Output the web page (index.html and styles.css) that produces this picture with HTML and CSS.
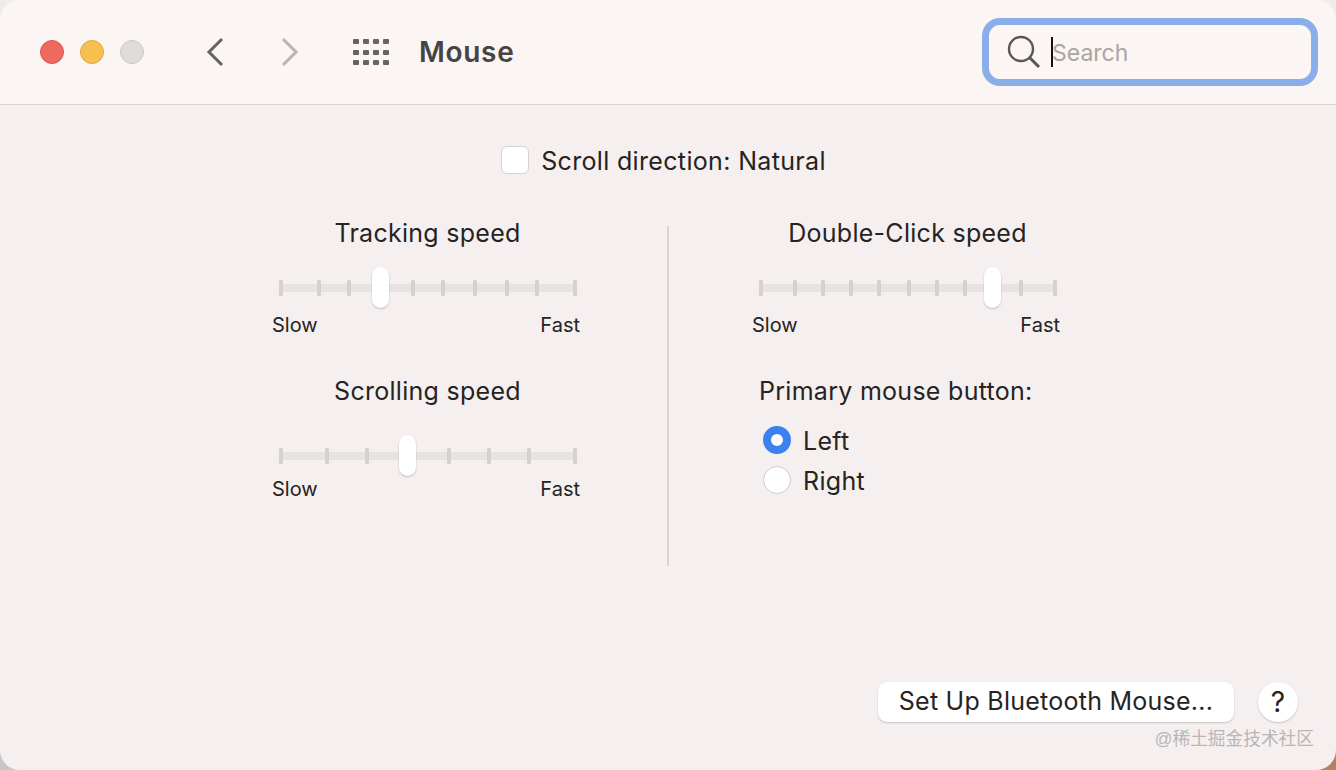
FILE: index.html
```html
<!DOCTYPE html>
<html lang="en">
<head>
<meta charset="utf-8">
<title>Mouse</title>
<link rel="stylesheet" href="styles.css">
</head>
<body>
<div class="window">
  <header class="titlebar">
    <div class="lights">
      <span class="light red"></span>
      <span class="light yellow"></span>
      <span class="light gray"></span>
    </div>
    <svg class="chev" width="18" height="30" viewBox="0 0 18 30"><path d="M16 2 L3 15 L16 28" fill="none" stroke="#656260" stroke-width="3"/></svg>
    <svg class="chev fwd" width="18" height="30" viewBox="0 0 18 30"><path d="M2 2 L15 15 L2 28" fill="none" stroke="#b7b4b2" stroke-width="3"/></svg>
    <svg class="grid-icon" width="36" height="26" viewBox="0 0 36 26" fill="#666361">
      <rect x="0" y="0" width="6" height="5" rx="1"/><rect x="10" y="0" width="6" height="5" rx="1"/><rect x="20" y="0" width="6" height="5" rx="1"/><rect x="30" y="0" width="6" height="5" rx="1"/>
      <rect x="0" y="11" width="6" height="5" rx="1"/><rect x="10" y="11" width="6" height="5" rx="1"/><rect x="20" y="11" width="6" height="5" rx="1"/><rect x="30" y="11" width="6" height="5" rx="1"/>
      <rect x="0" y="21" width="6" height="5" rx="1"/><rect x="10" y="21" width="6" height="5" rx="1"/><rect x="20" y="21" width="6" height="5" rx="1"/><rect x="30" y="21" width="6" height="5" rx="1"/>
    </svg>
    <h1 class="title">Mouse</h1>
    <div class="search">
      <svg class="search-icon" width="34" height="34" viewBox="0 0 34 34"><circle cx="14" cy="14" r="12" fill="none" stroke="#5a5654" stroke-width="2.4"/><path d="M22.5 22.5 L32 32" stroke="#5a5654" stroke-width="3" fill="none"/></svg>
      <span class="caret"></span>
      <span class="placeholder">Search</span>
    </div>
  </header>

  <main class="content">
    <label class="scroll-row">
      <span class="checkbox"></span>
      <span class="nudge">Scroll direction: Natural</span>
    </label>

    <div class="panes">
      <section class="col left">
        <h2 class="heading">Tracking speed</h2>
        <div class="slider">
          <svg class="track" width="308" height="42" viewBox="0 0 308 42">
            <rect class="rail" x="9" y="17" width="294" height="8"/>
            <rect class="tick" x="7" y="13" width="4" height="16" rx="1.5"/><rect class="tick" x="45" y="13" width="4" height="16" rx="1.5"/><rect class="tick" x="75" y="13" width="4" height="16" rx="1.5"/><rect class="tick" x="139" y="13" width="4" height="16" rx="1.5"/><rect class="tick" x="169" y="13" width="4" height="16" rx="1.5"/><rect class="tick" x="201" y="13" width="4" height="16" rx="1.5"/><rect class="tick" x="233" y="13" width="4" height="16" rx="1.5"/><rect class="tick" x="263" y="13" width="4" height="16" rx="1.5"/><rect class="tick" x="301" y="13" width="4" height="16" rx="1.5"/>
          </svg>
          <span class="thumb" style="left:100px"></span>
        </div>
        <div class="ends"><span>Slow</span><span>Fast</span></div>

        <h2 class="heading second">Scrolling speed</h2>
        <div class="slider low">
          <svg class="track" width="308" height="42" viewBox="0 0 308 42">
            <rect class="rail" x="9" y="17" width="294" height="8"/>
            <rect class="tick" x="7" y="13" width="4" height="16" rx="1.5"/><rect class="tick" x="53" y="13" width="4" height="16" rx="1.5"/><rect class="tick" x="93" y="13" width="4" height="16" rx="1.5"/><rect class="tick" x="175" y="13" width="4" height="16" rx="1.5"/><rect class="tick" x="215" y="13" width="4" height="16" rx="1.5"/><rect class="tick" x="255" y="13" width="4" height="16" rx="1.5"/><rect class="tick" x="301" y="13" width="4" height="16" rx="1.5"/>
          </svg>
          <span class="thumb" style="left:127px"></span>
        </div>
        <div class="ends tight"><span>Slow</span><span>Fast</span></div>
      </section>

      <div class="divider"></div>

      <section class="col right">
        <h2 class="heading">Double-Click speed</h2>
        <div class="slider">
          <svg class="track" width="308" height="42" viewBox="0 0 308 42">
            <rect class="rail" x="9" y="17" width="294" height="8"/>
            <rect class="tick" x="7" y="13" width="4" height="16" rx="1.5"/><rect class="tick" x="41" y="13" width="4" height="16" rx="1.5"/><rect class="tick" x="69" y="13" width="4" height="16" rx="1.5"/><rect class="tick" x="97" y="13" width="4" height="16" rx="1.5"/><rect class="tick" x="125" y="13" width="4" height="16" rx="1.5"/><rect class="tick" x="155" y="13" width="4" height="16" rx="1.5"/><rect class="tick" x="183" y="13" width="4" height="16" rx="1.5"/><rect class="tick" x="211" y="13" width="4" height="16" rx="1.5"/><rect class="tick" x="267" y="13" width="4" height="16" rx="1.5"/><rect class="tick" x="301" y="13" width="4" height="16" rx="1.5"/>
          </svg>
          <span class="thumb" style="left:232px"></span>
        </div>
        <div class="ends"><span>Slow</span><span>Fast</span></div>

        <h2 class="heading second primary">Primary mouse button:</h2>
        <div class="radios">
          <label class="radio-row"><span class="radio on"></span><span class="nudge">Left</span></label>
          <label class="radio-row"><span class="radio"></span><span class="nudge">Right</span></label>
        </div>
      </section>
    </div>

    <footer class="actions">
      <button class="btn"><span class="btn-label">Set Up Bluetooth Mouse...</span></button>
      <button class="help">?</button>
    </footer>
    <div class="watermark">@稀土掘金技术社区</div>
  </main>
</div>
</body>
</html>
```
FILE: styles.css
```css
* { box-sizing: border-box; }
html, body { margin: 0; height: 100%; }
body {
  width: 1336px;
  height: 770px;
  overflow: hidden;
  background:
    linear-gradient(#ececec 0, #ececec 50%, transparent 50%),
    linear-gradient(90deg, #c6c6c6 0%, #c6c6c6 50%, #ae8264 100%);
  font-family: Inter, "Liberation Sans", "Noto Sans CJK SC", sans-serif;
  color: #262322;
}
.window {
  width: 1336px;
  height: 770px;
  display: flex;
  flex-direction: column;
  border-radius: 20px;
  overflow: hidden;
  background: #f5efef;
}
.titlebar {
  height: 105px;
  flex: none;
  display: flex;
  align-items: center;
  padding: 0 18px 1px 40px;
  background: #fbf5f3;
  border-bottom: 1px solid #d6d2d0;
}
.lights { display: flex; gap: 16px; }
.light {
  width: 24px;
  height: 24px;
  border-radius: 50%;
  border: 1px solid transparent;
}
.red { background: #ee6a60; border-color: #d9564d; }
.yellow { background: #f6bf4f; border-color: #dfa83a; }
.gray { background: #dfdcda; border-color: #c9c6c4; }
.chev { margin-left: 62px; flex: none; }
.chev.fwd { margin-left: 57px; }
.grid-icon { margin-left: 54px; flex: none; }
.title {
  margin: 0 0 0 30px;
  font-size: 28px;
  font-weight: 600;
  letter-spacing: 0.7px;
  color: #484443;
}
.search {
  margin-left: auto;
  width: 336px;
  height: 68px;
  display: flex;
  align-items: center;
  padding-left: 18px;
  border: 7px solid #8aaeea;
  border-radius: 18px;
}
.search-icon { flex: none; }
.caret {
  width: 2px;
  height: 30px;
  margin-left: 10px;
  background: #111;
  flex: none;
}
.placeholder {
  font-size: 23px;
  margin: 3px 0 0 -1px;
  color: #a9a5a2;
}
.content {
  flex: 1;
  display: flex;
  flex-direction: column;
  position: relative;
}
.nudge { padding-top: 2px; }
.scroll-row {
  display: flex;
  align-items: center;
  justify-content: center;
  gap: 12px;
  height: 30px;
  margin: 40px 0 0;
  padding-right: 9px;
  font-size: 25px;
  letter-spacing: 0.34px;
}
.checkbox {
  width: 28px;
  height: 28px;
  border-radius: 6px;
  background: #fff;
  border: 1px solid #d6d2d2;
}
.panes {
  display: flex;
  height: 340px;
  margin-top: 51px;
  padding-left: 272px;
}
.col { width: 308px; flex: none; }
.divider {
  width: 2px;
  margin: 0 83px 0 87px;
  background: #d9d5d5;
  flex: none;
}
.heading {
  margin: -23px 0 0;
  height: 30px;
  line-height: 30px;
  font-size: 25px;
  font-weight: 400;
  letter-spacing: 0.28px;
  text-align: center;
  padding-left: 3px;
}
.heading.second { margin-top: 38px; }
.col .heading:first-child { margin-top: -8px; }
.heading.primary { text-align: left; padding-left: 7px; }
.slider { position: relative; width: 308px; height: 42px; margin-top: 19px; }
.slider.low { margin-top: 29px; }
.track { display: block; }
.rail { fill: #e8e3e3; }
.tick { fill: #d5d0d0; }
.thumb {
  position: absolute;
  top: 0;
  width: 17px;
  height: 41px;
  background: #fff;
  border-radius: 9px;
  box-shadow: 0 1px 2px rgba(0,0,0,.22);
}
.ends {
  display: flex;
  justify-content: space-between;
  font-size: 20px;
  line-height: 26px;
  margin-top: 3px;
}
.ends.tight { margin-top: -1px; }
.radios { margin-top: 20px; padding-left: 11px; display: flex; flex-direction: column; gap: 12px; }
.radio-row { display: flex; align-items: center; gap: 12px; height: 28px; font-size: 25px; letter-spacing: 0.3px; }
.radio {
  width: 28px;
  height: 28px;
  border-radius: 50%;
  background: #fff;
  border: 1px solid #d0cccc;
  flex: none;
}
.radio.on {
  background: #fff;
  border: 8px solid #3b82f0;
}
.actions {
  display: flex;
  align-items: center;
  justify-content: flex-end;
  gap: 24px;
  margin-top: auto;
  padding: 0 38px 48px 0;
}
.btn, .help {
  height: 40px;
  border: 0;
  background: #fff;
  color: #262322;
  font-family: inherit;
  font-size: 25px;
  box-shadow: 0 1px 2px rgba(0,0,0,.2);
}
.btn { width: 356px; border-radius: 9px; padding: 0 0 2px; letter-spacing: 0.25px; }
.help { width: 40px; border-radius: 50%; padding: 0; font-size: 28px; font-weight: 400; }
.watermark {
  position: absolute;
  right: 22px;
  bottom: 20px;
  font-size: 17.7px;
  line-height: 22px;
  color: #b9b5b5;
  font-family: "Liberation Sans", "Noto Sans CJK SC", sans-serif;
}
```
